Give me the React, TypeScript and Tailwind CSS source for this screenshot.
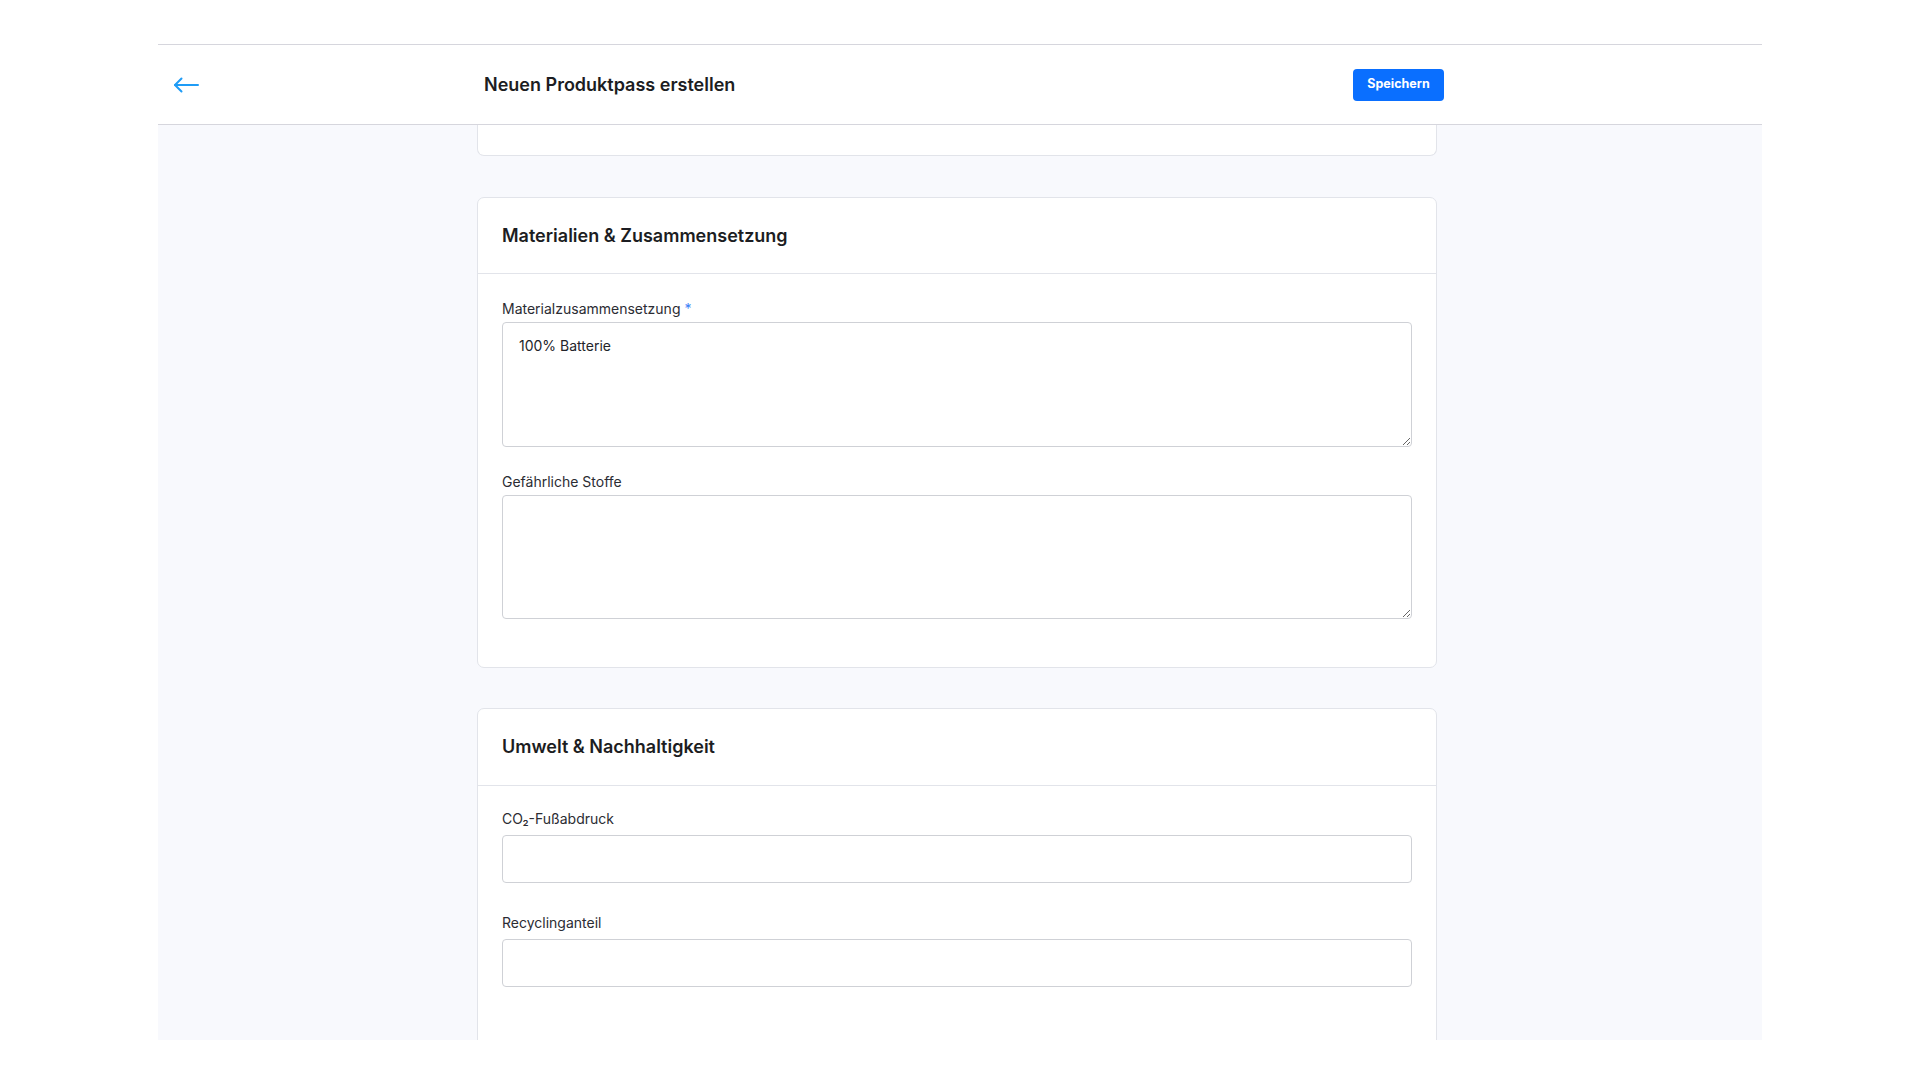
import React from "react";

const font = { fontFamily: "Inter, 'Noto Sans', sans-serif" };

function Label({ text, required, className }: { text: React.ReactNode; required?: boolean; className?: string }) {
  return (
    <div className={"text-[14px] leading-5 text-[#2b2c33] " + (className || "")}>
      {text}
      {required && <span className="text-[#3b82f6]"> *</span>}
    </div>
  );
}

export default function App() {
  return (
    <div className="min-h-[1080px] bg-white" style={font}>
      <div className="h-[44px]" />
      <div className="ml-[158px] w-[1604px]">
        {/* Header */}
        <div className="flex h-[81px] items-center border-y border-[#d6d6dd] bg-white">
          <div className="flex w-[326px] items-center pl-[15px]">
            <svg width="26" height="16" viewBox="0 0 26 16" fill="none" className="block">
              <path d="M25 8H2" stroke="#1f9cf6" strokeWidth="2" strokeLinecap="round" />
              <path d="M8.5 1.5L2 8l6.5 6.5" stroke="#1f9cf6" strokeWidth="2" strokeLinecap="round" strokeLinejoin="round" />
            </svg>
          </div>
          <div className="flex w-[960px] items-center justify-between">
            <div className="text-[18px] font-semibold leading-7 text-[#1c1d22]">Neuen Produktpass erstellen</div>
            <button className="h-[32px] w-[91px] rounded-[4px] bg-[#0a6fff] text-[12.5px] font-bold text-white">
              Speichern
            </button>
          </div>
        </div>

        {/* Content */}
        <div className="h-[915px] overflow-hidden bg-[#f8f9fd]">
          <div className="ml-[319px] w-[960px]">
            <div className="h-[31px] rounded-b-[7px] border border-t-0 border-[#e2e4ea] bg-white" />

            <div className="mt-[41px] rounded-[7px] border border-[#e2e4ea] bg-white">
              <div className="flex h-[76px] items-center border-b border-[#e2e4ea] px-6">
                <div className="text-[18px] font-semibold leading-7 text-[#1c1d22]">Materialien &amp; Zusammensetzung</div>
              </div>
              <div className="px-6 pt-[25px] pb-[48px]">
                <Label text="Materialzusammensetzung" required />
                <textarea
                  readOnly
                  defaultValue="100% Batterie"
                  className="mt-[3px] block h-[125px] w-[910px] rounded-[4px] border border-[#cfd1d6] bg-white px-4 pt-[13px] pb-[14px] text-[14px] leading-5 text-[#23242a] outline-none"
                  style={font}
                />
                <Label text="Gefährliche Stoffe" className="mt-[25px]" />
                <textarea
                  readOnly
                  defaultValue=""
                  className="mt-[3px] block h-[124px] w-[910px] rounded-[4px] border border-[#cfd1d6] bg-white px-4 pt-[13px] pb-[14px] text-[14px] leading-5 text-[#23242a] outline-none"
                  style={font}
                />
              </div>
            </div>

            <div className="mt-[40px] rounded-[7px] border border-[#e2e4ea] bg-white">
              <div className="flex h-[77px] items-center border-b border-[#e2e4ea] px-6">
                <div className="text-[18px] font-semibold leading-7 text-[#1c1d22]">Umwelt &amp; Nachhaltigkeit</div>
              </div>
              <div className="px-6 pt-[23px] pb-[60px]">
                <Label text="CO₂-Fußabdruck" />
                <input
                  readOnly
                  defaultValue=""
                  className="mt-[6px] block h-[48px] w-[910px] rounded-[4px] border border-[#cfd1d6] bg-white px-4 text-[14px] text-[#23242a] outline-none"
                  style={font}
                />
                <Label text="Recyclinganteil" className="mt-[30px]" />
                <input
                  readOnly
                  defaultValue=""
                  className="mt-[6px] block h-[48px] w-[910px] rounded-[4px] border border-[#cfd1d6] bg-white px-4 text-[14px] text-[#23242a] outline-none"
                  style={font}
                />
              </div>
            </div>
          </div>
        </div>
      </div>
    </div>
  );
}
